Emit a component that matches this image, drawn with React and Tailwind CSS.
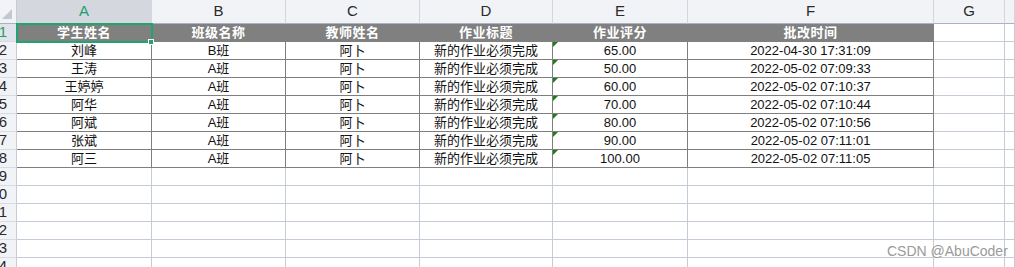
import React from "react";

const COLS = ["A", "B", "C", "D", "E", "F", "G", ""];

const ROWS = [
  ["学生姓名", "班级名称", "教师姓名", "作业标题", "作业评分", "批改时间"],
  ["刘峰", "B班", "阿卜", "新的作业必须完成", "65.00", "2022-04-30 17:31:09"],
  ["王涛", "A班", "阿卜", "新的作业必须完成", "50.00", "2022-05-02 07:09:33"],
  ["王婷婷", "A班", "阿卜", "新的作业必须完成", "60.00", "2022-05-02 07:10:37"],
  ["阿华", "A班", "阿卜", "新的作业必须完成", "70.00", "2022-05-02 07:10:44"],
  ["阿斌", "A班", "阿卜", "新的作业必须完成", "80.00", "2022-05-02 07:10:56"],
  ["张斌", "A班", "阿卜", "新的作业必须完成", "90.00", "2022-05-02 07:11:01"],
  ["阿三", "A班", "阿卜", "新的作业必须完成", "100.00", "2022-05-02 07:11:05"],
];

const TOTAL_ROWS = 14;

function Cell({ row, col, value }) {
  const inTable = row < ROWS.length && col < 6;
  const isHead = row === 0 && col < 6;
  const showFlag = col === 4 && row > 0 && row < ROWS.length;

  let cls = "relative flex items-center justify-center overflow-hidden whitespace-nowrap border-r border-b text-[13px] ";
  if (isHead) {
    cls += "bg-[#808080] border-[#808080] text-white font-bold tracking-[0.5px]";
  } else if (inTable) {
    cls += "bg-white border-[#7f7f7f] text-[#111]";
  } else {
    cls += "bg-white border-[#c6cbd8]";
  }
  if (col === 6 && row < ROWS.length) cls = cls.replace("border-[#c6cbd8]", "border-[#c6cbd8]");

  return (
    <div className={cls}>
      {showFlag && (
        <span className="absolute left-0 top-0 w-[5px] h-[5px] bg-[#1a7f1a] [clip-path:polygon(0_0,100%_0,0_100%)]" />
      )}
      {value}
    </div>
  );
}

export default function App() {
  const rows = Array.from({ length: TOTAL_ROWS }, (_, i) => i);

  return (
    <div
      className="relative w-[1015px] h-[267px] overflow-hidden bg-white"
      style={{ fontFamily: '"Liberation Sans", "Noto Sans CJK SC", Arial, sans-serif' }}
    >
      <div className="grid grid-cols-[17px_135px_134px_134px_133px_135px_246px_71px_1fr] grid-rows-[24px_repeat(14,18px)]">
        {/* corner */}
        <div className="relative bg-[#f2f3f6] border-r border-b border-r-[#c6cbd8] border-b-[#a9b1c4]">
          <span className="absolute right-[4px] bottom-[4px] w-[10px] h-[10px] bg-[#c3c7cf] [clip-path:polygon(100%_0,100%_100%,0_100%)]" />
        </div>
        {/* column headers */}
        {COLS.map((c, i) => (
          <div
            key={"h" + i}
            className={
              "flex items-center justify-center border-r border-b border-r-[#d2d6de] border-b-[#a9b1c4] text-[15px] " +
              (i === 0 ? "bg-[#d4d7de] text-[#1e9e6a]" : "bg-[#f2f3f6] text-[#2a2a2a]")
            }
          >
            {c}
          </div>
        ))}

        {rows.map((r) => (
          <React.Fragment key={r}>
            <div
              className={
                "flex items-center justify-end pr-[9px] overflow-hidden border-r border-b border-r-[#c6cbd8] border-b-[#d6dae2] text-[15px] " +
                (r === 0 ? "bg-[#e0e3e9] text-[#1e9e6a]" : "bg-[#f2f3f6] text-[#2a2a2a]")
              }
            >
              {r + 1}
            </div>
            {COLS.map((_, c) => (
              <Cell key={c} row={r} col={c} value={r < ROWS.length && c < 6 ? ROWS[r][c] : ""} />
            ))}
          </React.Fragment>
        ))}
      </div>

      {/* active cell selection */}
      <div className="absolute left-[16px] top-[23px] w-[137px] h-[20px] border-2 border-[#21a46f]" />
      <div className="absolute left-[148px] top-[39px] w-[6px] h-[6px] bg-[#21a46f] border border-white" />

      {/* watermark */}
      <div className="absolute left-[887px] top-[244px] text-[14px] text-[#9a9a9a] leading-none">
        CSDN @AbuCoder
      </div>
    </div>
  );
}
